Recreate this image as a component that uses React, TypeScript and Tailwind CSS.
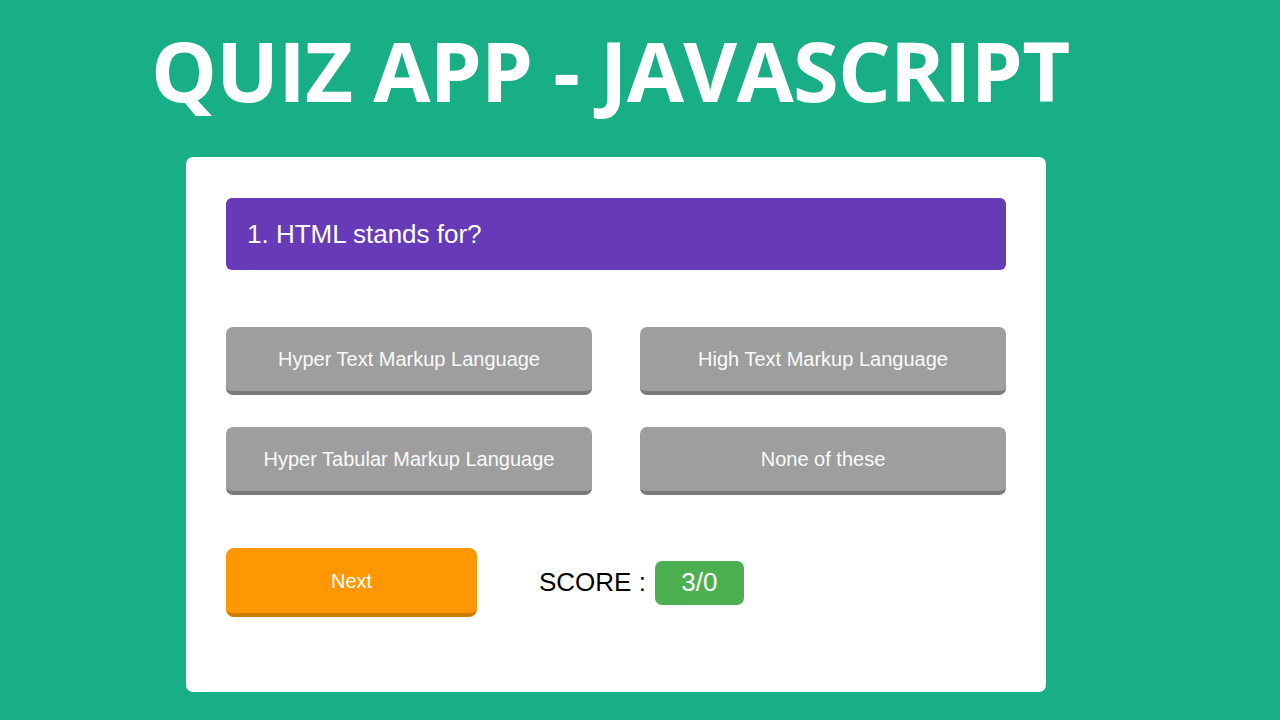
const options = [
  'Hyper Text Markup Language',
  'High Text Markup Language',
  'Hyper Tabular Markup Language',
  'None of these',
];

export default function App() {
  return (
    <div className="w-[1280px] h-[720px] bg-[#19af86] flex flex-col overflow-hidden">
      <h1
        className="mt-[28px] ml-[151px] text-white font-bold text-[83px] leading-none tracking-[-0.75px] whitespace-nowrap"
        style={{ fontFamily: '"Open Sans", sans-serif' }}
      >
        QUIZ APP - JAVASCRIPT
      </h1>

      <div
        className="mt-[46px] ml-[186px] w-[860px] h-[535px] bg-white rounded-[7px] px-[40px] pt-[41px]"
        style={{ fontFamily: '"Liberation Sans", Arial, sans-serif' }}
      >
        {/* question */}
        <div className="h-[72px] bg-[#673ab7] rounded-[6px] flex items-center px-[21px] text-white text-[26px]">
          1. HTML stands for?
        </div>

        {/* answers */}
        <div className="grid grid-cols-2 gap-x-[48px] gap-y-[32px] mt-[57px]">
          {options.map((o) => (
            <button
              key={o}
              className="h-[68px] bg-[#9e9e9e] border-b-[4px] border-[#7a7a7a] rounded-[7px] text-[#fafafa] text-[20px] flex items-center justify-center"
            >
              {o}
            </button>
          ))}
        </div>

        {/* footer */}
        <div className="flex items-center mt-[53px]">
          <button className="w-[251px] h-[69px] bg-[#ff9800] border-b-[4px] border-[#cc7a00] rounded-[8px] text-white text-[20px] flex items-center justify-center">
            Next
          </button>
          <span className="ml-[62px] text-[26px] text-black">SCORE :</span>
          <span className="ml-[9px] w-[89px] h-[44px] bg-[#4caf50] rounded-[7px] text-white text-[26px] flex items-center justify-center">
            3/0
          </span>
        </div>
      </div>
    </div>
  );
}
